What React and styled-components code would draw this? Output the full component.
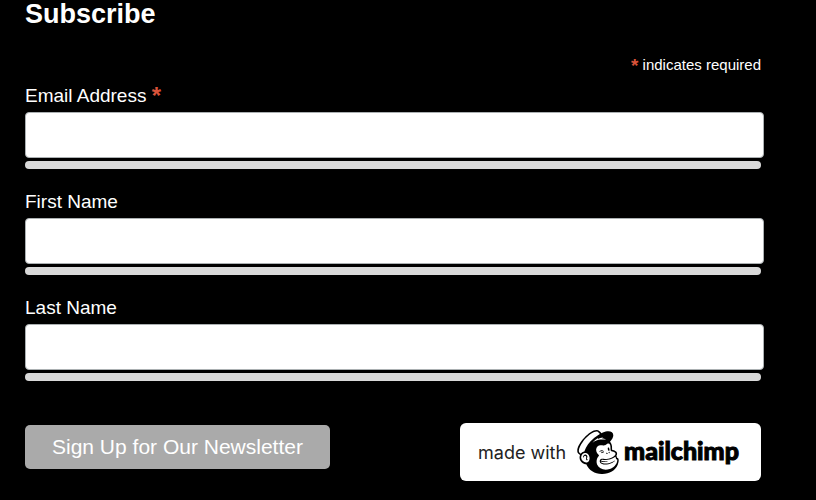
import React from 'react';
import styled, { createGlobalStyle } from 'styled-components';
import { SiMailchimp } from 'react-icons/si';

const GlobalStyle = createGlobalStyle`
  * {
    box-sizing: border-box;
  }

  body {
    margin: 0;
    background: #000;
    color: #fff;
    font-family: 'Liberation Sans', Helvetica, Arial, sans-serif;
  }
`;

const Form = styled.form`
  padding: 0 55px 19px 25px;
`;

const Title = styled.h2`
  margin: 0;
  font-size: 27px;
  line-height: 28px;
`;

const Required = styled.p`
  margin: 28px 0 10px;
  font-size: 15px;
  line-height: 18px;
  text-align: right;
`;

const Asterisk = styled.span`
  color: #d9533a;
  font-size: ${(props) => (props.$small ? '19px' : '24px')};
  font-weight: bold;
  line-height: 0;
  vertical-align: -2px;
`;

const Fields = styled.div`
  display: flex;
  flex-direction: column;
  gap: 21px;
`;

const Field = styled.div`
  display: flex;
  flex-direction: column;
`;

const Label = styled.label`
  margin-bottom: 4px;
  font-size: 19px;
  line-height: 24px;
`;

const Input = styled.input`
  width: calc(100% + 3px);
  height: 46px;
  padding: 8px 12px;
  border: 1px solid #abb0b2;
  border-radius: 4px;
  background: #fff;
  font: inherit;
  font-size: 19px;
`;

const Underline = styled.div`
  height: 8px;
  margin-top: 3px;
  border-radius: 4px;
  background: #d9d9d9;
`;

const Footer = styled.div`
  display: flex;
  align-items: flex-start;
  justify-content: space-between;
  margin-top: 42px;
`;

const SubmitButton = styled.button`
  height: 44px;
  margin: 2px 0 0;
  padding: 0 27px;
  border: 0;
  border-radius: 5px;
  background: #aaa;
  color: #fff;
  font-family: inherit;
  font-size: 21px;
  white-space: nowrap;
`;

const Badge = styled.a`
  display: flex;
  align-items: center;
  height: 58px;
  padding: 0 22px 0 18px;
  border-radius: 6px;
  background: #fff;
  color: #222;
  font-family: Inter, sans-serif;
  font-size: 18px;
  text-decoration: none;
  white-space: nowrap;
`;

const Freddie = styled(SiMailchimp)`
  width: 44px;
  height: 44px;
  margin: 0 4px 0 10px;
  color: #000;
`;

const Wordmark = styled.span`
  padding-bottom: 4px;
  color: #000;
  font-family: Lato, sans-serif;
  font-size: 25px;
  font-weight: 900;
  line-height: 28px;
  -webkit-text-stroke: 1px #000;
`;

const fields = [
  { id: 'email', label: 'Email Address', type: 'email', required: true },
  { id: 'fname', label: 'First Name', type: 'text' },
  { id: 'lname', label: 'Last Name', type: 'text' },
];

const App = () => {
  return (
    <>
      <GlobalStyle />
      <Form onSubmit={(e) => e.preventDefault()}>
        <Title>Subscribe</Title>
        <Required>
          <Asterisk $small>*</Asterisk> indicates required
        </Required>
        <Fields>
          {fields.map((field) => (
            <Field key={field.id}>
              <Label htmlFor={field.id}>
                {field.label} {field.required && <Asterisk>*</Asterisk>}
              </Label>
              <Input id={field.id} name={field.id} type={field.type} required={field.required} />
              <Underline />
            </Field>
          ))}
        </Fields>
        <Footer>
          <SubmitButton type="submit">Sign Up for Our Newsletter</SubmitButton>
          <Badge href="#">
            made with
            <Freddie />
            <Wordmark>mailchimp</Wordmark>
          </Badge>
        </Footer>
      </Form>
    </>
  );
};

export default App;
